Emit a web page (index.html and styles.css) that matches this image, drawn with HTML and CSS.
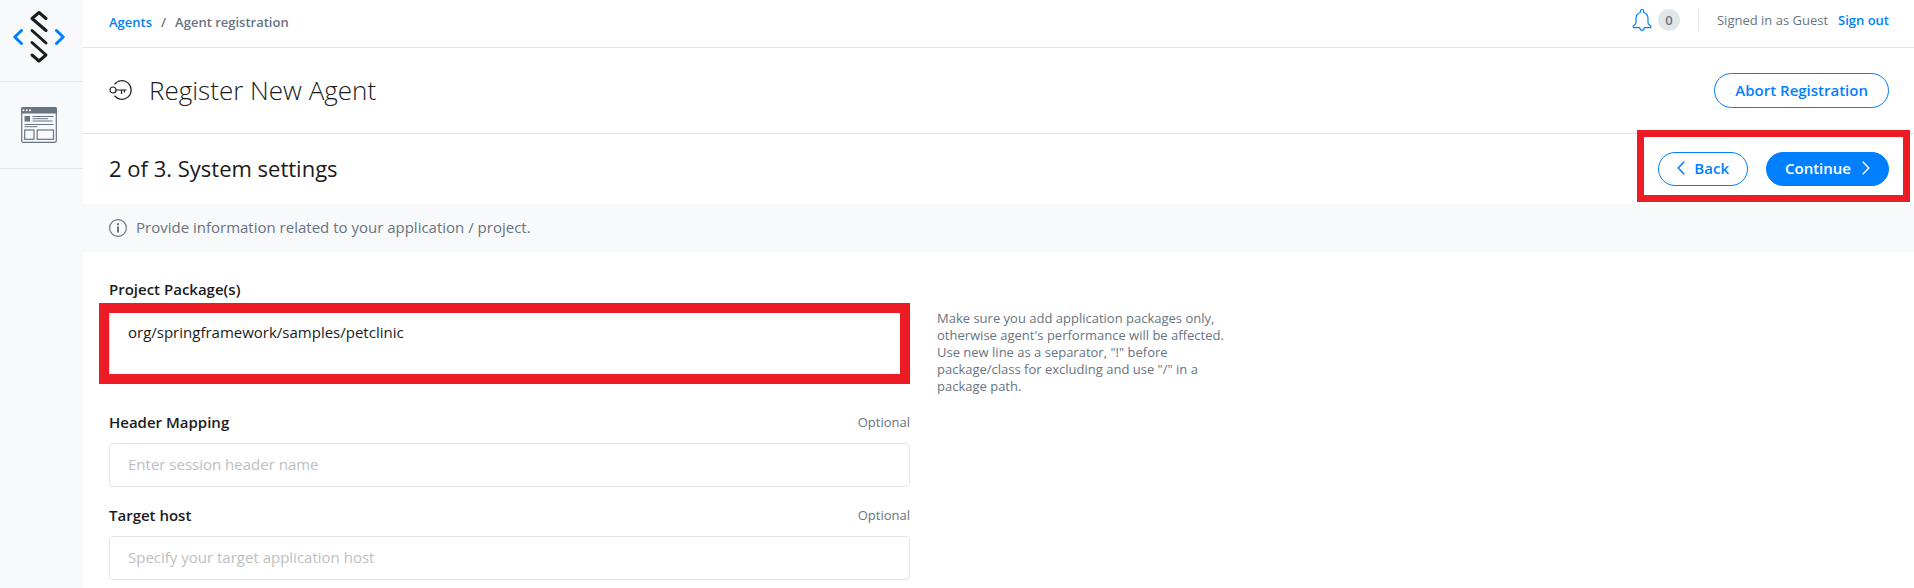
FILE: index.html
```html
<!DOCTYPE html>
<html lang="en">
<head>
<meta charset="utf-8">
<title>Agent registration</title>
<link rel="stylesheet" href="styles.css">
</head>
<body>
<div class="app">
  <nav class="sidebar" aria-label="Main">
    <a class="logo" href="#" aria-label="Home">
      <svg width="52" height="52" viewBox="0 0 52 52" fill="none" stroke-width="3" stroke-linecap="round" stroke-linejoin="round">
        <g stroke="#1b1b1d"><path d="M33 7.500 26 1.500 19 7.500 33 19.500"/><path d="M19 19.500 33 32"/><path d="M19 31.500 33 44 26 50 19 44"/></g>
        <g stroke="#007fff"><path d="M8.500 19.500 1.800 26 8.500 32.500"/><path d="M43.500 19.500 50.200 26 43.500 32.500"/></g>
      </svg>
    </a>
    <a class="nav-item" href="#" aria-label="Agents">
      <svg width="36" height="36" viewBox="0 0 36 36" fill="none" stroke="#687481">
        <rect x=".7" y=".7" width="34.600" height="34.600" rx="1.500" stroke-width="1.200"/>
        <path d="M0 6V2Q0 0 2 0H34Q36 0 36 2V6.500H0Z" fill="#687481" stroke="none"/>
        <g fill="#fff" stroke="none"><circle cx="2.500" cy="3.300" r="1"/><circle cx="5.700" cy="3.300" r="1"/><circle cx="9" cy="3.300" r="1"/></g>
        <rect x="3.500" y="9" width="5.500" height="5.500" fill="#687481" stroke="none"/>
        <path d="M11.500 9.500H32.500M11.500 11.700H27M11.500 14H31.500M3.500 17.500H32.500M3.500 19.700H16.500"/>
        <rect x="3.700" y="23" width="9.300" height="9.300" stroke-width="1.200"/><rect x="16.200" y="23" width="16.300" height="9.300" stroke-width="1.200"/>
      </svg>
    </a>
  </nav>
  <div class="page">
    <header class="topbar">
      <div class="crumbs"><a href="#">Agents</a><span>/</span><span>Agent registration</span></div>
      <div class="account">
        <div class="alerts">
          <svg width="20" height="22" viewBox="0 0 20 22" fill="none" stroke="#007fff" stroke-width="1.200" stroke-linejoin="round"><path d="M8.300 3.500V2Q8.500.7 10 .7T11.700 2V3.500C14.500 4.300 16 6.800 16 9.500V13.500Q16 15.200 17.800 16.300T18.500 18.700H12.200Q12 21.300 10 21.300T7.800 18.700H1.500Q.4 17.400 2.200 16.300T4 13.500V9.500C4 6.800 5.500 4.300 8.300 3.500Z"/></svg>
          <span class="count">0</span>
        </div>
        <div class="session"><span>Signed in as Guest</span><a href="#">Sign out</a></div>
      </div>
    </header>
    <div class="title-row">
      <div class="heading">
        <svg width="24" height="22" viewBox="0 0 24 22" fill="none" stroke="#1b1b1d" stroke-width="1.200"><circle cx="4" cy="11" r="3"/><path d="M7 11H17.500M12.500 11V15M15.300 11V13.500M5.500 5.300A9.300 9.300 0 1 1 5.500 16.700"/></svg>
        <h1>Register New Agent</h1>
      </div>
      <button class="btn abort" type="button">Abort Registration</button>
    </div>
    <main>
      <div class="step-row">
        <h2>2 of 3. System settings</h2>
        <div class="steps">
          <button class="btn" type="button"><svg width="8" height="14" viewBox="0 0 8 14" fill="none" stroke="currentColor" stroke-width="1.500"><path d="M7.200.8 1.200 7 7.200 13.200"/></svg>Back</button>
          <button class="btn primary" type="button">Continue<svg width="8" height="14" viewBox="0 0 8 14" fill="none" stroke="currentColor" stroke-width="1.500"><path d="M.8.8 6.800 7 .8 13.200"/></svg></button>
          <span class="mark mark-steps"></span>
        </div>
      </div>
      <div class="info">
        <svg width="18" height="18" viewBox="0 0 18 18" fill="none" stroke="#687481"><circle cx="9" cy="9" r="8.400" stroke-width="1.200"/><path d="M9 7.500V13.500M9 4.200V6.200" stroke-width="2"/></svg>
        <span>Provide information related to your application / project.</span>
      </div>
      <form class="form">
        <div class="field">
          <div class="label-row"><label for="packages">Project Package(s)</label></div>
          <div class="control">
            <textarea id="packages">org/springframework/samples/petclinic</textarea>
            <span class="mark mark-field"></span>
          </div>
        </div>
        <p class="hint">Make sure you add application packages only, otherwise agent's performance will be affected. Use new line as a separator, "!" before package/class for excluding and use "/" in a package path.</p>
        <div class="field">
          <div class="label-row"><label for="header">Header Mapping</label><span>Optional</span></div>
          <input id="header" type="text" placeholder="Enter session header name">
        </div>
        <div class="field">
          <div class="label-row"><label for="host">Target host</label><span>Optional</span></div>
          <input id="host" type="text" placeholder="Specify your target application host">
        </div>
      </form>
    </main>
  </div>
</div>
</body>
</html>
```
FILE: styles.css
```css
* { box-sizing: border-box; }
body { margin: 0; background: #fff; color: #1b1b1d; font: 14px/20px "Open Sans", sans-serif; }
svg { display: block; flex: none; }
a { color: #007fff; text-decoration: none; }
h1, h2, p { margin: 0; }
.app { display: flex; min-height: 100vh; }
.sidebar { width: 83px; flex: none; background: #f8f9fb; }
.logo, .nav-item { display: flex; align-items: center; justify-content: center; padding-right: 5px; border-bottom: 1px solid #e3e6e8; }
.logo { height: 82px; padding-bottom: 7px; }
.nav-item { height: 87px; }
.page { flex: 1; min-width: 0; }
.topbar, .title-row, .step-row { display: flex; align-items: center; justify-content: space-between; padding: 0 25px 0 26px; }
.topbar { height: 48px; border-bottom: 1px solid #e3e6e8; color: #687481; font-size: 13px; }
.crumbs { display: flex; gap: 9px; padding-bottom: 4px; font-weight: 600; }
.account { display: flex; align-items: center; padding-bottom: 8px; }
.alerts { display: flex; align-items: center; gap: 6px; padding-right: 18px; border-right: 1px solid #e3e6e8; }
.count { width: 22px; height: 22px; border-radius: 50%; background: #e3e6e8; font-size: 13px; font-weight: 600; line-height: 22px; text-align: center; }
.session { display: flex; gap: 10px; padding-left: 18px; }
.session a { font-weight: 600; }
.title-row { height: 86px; border-bottom: 1px solid #e3e6e8; }
.heading { display: flex; align-items: center; gap: 16px; padding-bottom: 2px; }
h1 { font-size: 26px; font-weight: 300; line-height: 36px; }
h2 { padding-bottom: 2px; font-size: 22px; font-weight: 400; line-height: 32px; }
.btn { display: flex; align-items: center; gap: 9px; height: 34px; padding: 0 18px 2px; border: 1px solid #007fff; border-radius: 18px; background: #fff; color: #007fff; font: 600 15px/20px "Open Sans", sans-serif; }
.abort { height: 35px; padding: 0 20px 2px; }
.primary { gap: 11px; background: #007fff; color: #fff; }
.step-row { height: 70px; }
.steps { position: relative; display: flex; gap: 18px; }
.mark { position: absolute; pointer-events: none; border: 7px solid #ed1c24; }
.mark-steps { inset: -22px -21px -16px; }
.info { display: flex; align-items: center; gap: 9px; height: 48px; padding: 0 26px; background: #f8f9fb; color: #687481; font-size: 15px; }
.info span { padding-bottom: 2px; }
.form { display: grid; grid-template-columns: minmax(0, 801px) minmax(0, 300px); column-gap: 27px; padding: 27px 26px 9px; }
.field { grid-column: 1; }
.label-row { display: flex; align-items: center; justify-content: space-between; height: 20px; margin-bottom: 11px; }
.label-row label { font-size: 15px; font-weight: 600; }
.label-row span { color: #687481; font-size: 13px; }
.control { position: relative; }
textarea, input { display: block; width: 100%; border: 1px solid #e3e6e8; border-radius: 4px; background: #fff; color: #1b1b1d; font: 15px/20px "Open Sans", sans-serif; padding: 11px 18px; }
input { height: 44px; margin-bottom: 18px; padding: 10px 18px 12px; }
textarea { height: 70px; margin-bottom: 32px; resize: none; overflow: hidden; }
::placeholder { color: #bcc0c3; opacity: 1; }
.mark-field { inset: -7px 0 -4px -10px; border-width: 10px; }
.hint { grid-column: 2; margin-top: 31px; color: #687481; font-size: 13px; line-height: 17px; }
```
